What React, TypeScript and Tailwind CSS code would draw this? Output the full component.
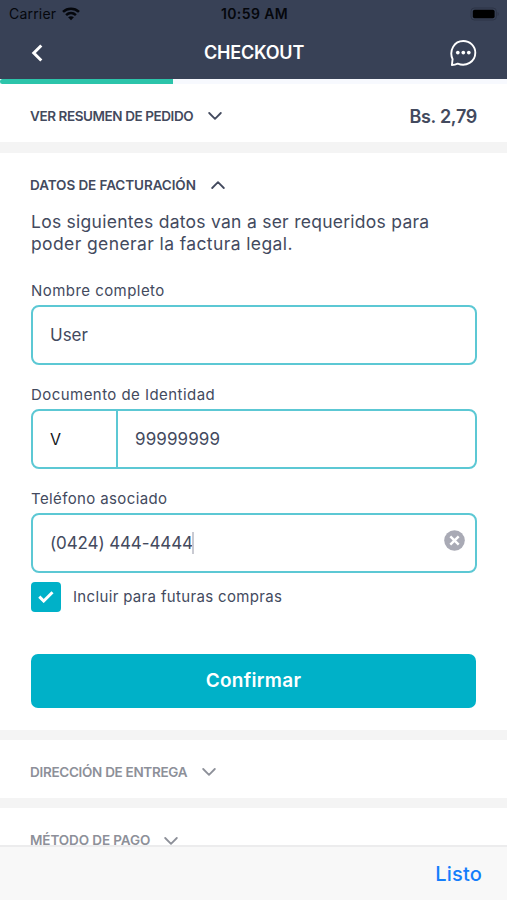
import { useState } from 'react';

const Wifi = () => (
  <svg width="18" height="14" viewBox="0 0 18 14" fill="none" stroke="#05070c" strokeWidth="2.6">
    <path d="M1 4.9C5.6 .7 12.4 .7 17 4.9" />
    <path d="M4.1 8.1C7 5.5 11 5.5 13.9 8.1" />
    <path d="M9 13.3L6.1 10.3C7.8 8.9 10.2 8.9 11.9 10.3Z" fill="#05070c" stroke="none" />
  </svg>
);

const Battery = () => (
  <svg width="30" height="14" viewBox="0 0 30 14">
    <rect x="1" y="1" width="25.4" height="12" rx="3.4" fill="none" stroke="#2d3446" strokeWidth="1" />
    <rect x="2.8" y="2.8" width="21.8" height="8.4" rx="1.8" fill="#000" />
    <path d="M27.6 5v4c1.5-.7 1.5-3.3 0-4z" fill="#2d3446" />
  </svg>
);

const ChatBubble = () => (
  <svg width="28" height="28" viewBox="0 0 28 28" fill="none" stroke="#fff" strokeWidth="1.9" strokeLinejoin="round">
    <path d="M2.9 26L3.6 20.2C-.2 11.6 5.2 2 14.3 2C21 2 26.3 7.2 26.3 13.8C26.3 22.8 17 28.2 8.7 24.6Q6 25.9 2.9 26Z" />
    <g fill="#fff" stroke="none">
      <circle cx="8.8" cy="13.6" r="1.85" />
      <circle cx="14.3" cy="13.6" r="1.85" />
      <circle cx="19.8" cy="13.6" r="1.85" />
    </g>
  </svg>
);

const Chevron = ({ up = false }: { up?: boolean }) => (
  <svg width="14" height="8" viewBox="0 0 14 8" fill="none" stroke="currentColor" strokeWidth="1.8" strokeLinecap="round" strokeLinejoin="round">
    <path d={up ? 'M1.2 7L7 1.2L12.8 7' : 'M1.2 1L7 6.8L12.8 1'} />
  </svg>
);

const Divider = ({ className = 'h-[10px]' }: { className?: string }) => (
  <div className={`shrink-0 bg-[#f4f4f4] ${className}`} />
);

const App = () => {
  const [name, setName] = useState('User');
  const [documentId, setDocumentId] = useState('99999999');
  const [phone, setPhone] = useState('(0424) 444-4444');
  const [save, setSave] = useState(true);

  return (
    <div className="flex h-[900px] w-[507px] flex-col overflow-hidden bg-white font-['Inter',sans-serif] text-[#434a5e]">
      {/* Header */}
      <header className="h-[79px] shrink-0 bg-[#384156]">
        <div className="grid h-[27px] grid-cols-3 items-center pl-[9px] pr-[7px] text-[#05070c]">
          <div className="flex items-center gap-[6px]">
            <span className="text-[14px] tracking-[0.2px]">Carrier</span>
            <Wifi />
          </div>
          <span className="text-center text-[14px] font-semibold tracking-[0.4px]">10:59 AM</span>
          <div className="flex justify-end"><Battery /></div>
        </div>
        <div className="flex h-[51px] items-center justify-between pl-[31px] pr-[30px] text-white">
          <button className="w-7" aria-label="Volver">
            <svg width="12" height="18" viewBox="0 0 12 18" fill="none" stroke="#fff" strokeWidth="3">
              <path d="M10.3 1.5L2.8 9L10.3 16.5" />
            </svg>
          </button>
          <h1 className="text-[18px] font-semibold tracking-[-0.2px]">CHECKOUT</h1>
          <button aria-label="Ayuda"><ChatBubble /></button>
        </div>
      </header>

      {/* Progress */}
      <div className="h-[5px] shrink-0 bg-[#f7f9fe]">
        <div className="h-full w-[173px] rounded-l-full bg-[#2cc4aa]" />
      </div>

      <main className="flex min-h-0 flex-1 flex-col overflow-hidden">
        <section className="flex h-[58px] shrink-0 items-center justify-between px-[30px] pt-[6px]">
          <button className="flex items-center gap-[15px]">
            <span className="text-[13.5px] font-semibold tracking-[-0.42px]">VER RESUMEN DE PEDIDO</span>
            <Chevron />
          </button>
          <span className="text-[18px] font-semibold tracking-[-0.3px]">Bs. 2,79</span>
        </section>
        <Divider className="h-[11px]" />

        <section className="flex h-[577px] shrink-0 flex-col pl-[31px] pr-[30px] pt-[22px]">
          <button className="-ml-px flex h-5 items-center gap-[15px]">
            <span className="text-[13.5px] font-semibold tracking-[-0.08px]">DATOS DE FACTURACIÓN</span>
            <Chevron up />
          </button>
          <p className="mt-[16px] whitespace-nowrap text-[17.5px] leading-[22px] tracking-[0.26px]">
            Los siguientes datos van a ser requeridos para<br />
            <span className="tracking-[0.39px]">poder generar la factura legal.</span>
          </p>

          <label className="mt-[26px] text-[15px] leading-[20px] tracking-[0.45px]">Nombre completo</label>
          <div className="mt-[4px] flex h-[60px] shrink-0 rounded-[8px] border-2 border-[#5cc8d4]">
            <input className="w-full bg-transparent px-[17px] pt-[2px] text-[17px] outline-none" value={name} onChange={(e) => setName(e.target.value)} />
          </div>

          <label className="mt-[20px] text-[15px] leading-[20px] tracking-[0.45px]">Documento de Identidad</label>
          <div className="mt-[4px] flex h-[60px] shrink-0 rounded-[8px] border-2 border-[#5cc8d4]">
            <button className="w-[85px] shrink-0 border-r-2 border-[#5cc8d4] px-[17px] text-left text-[16px] text-[#15171c]">V</button>
            <input className="w-full bg-transparent px-[17px] pt-[2px] text-[17px] tracking-[0.1px] outline-none" value={documentId} onChange={(e) => setDocumentId(e.target.value)} />
          </div>

          <label className="mt-[20px] text-[15px] leading-[20px] tracking-[0.38px]">Teléfono asociado</label>
          <div className="mt-[4px] flex h-[60px] shrink-0 items-center rounded-[8px] border-2 border-[#5cc8d4] pl-[17px] pr-[10px]">
            <input className="w-[142px] bg-transparent pt-[2px] text-[17px] tracking-[-0.12px] outline-none" value={phone} onChange={(e) => setPhone(e.target.value)} />
            <span className="h-[22px] w-[2px] bg-[#c9cad2]" />
            <button className="mb-[6px] ml-auto" aria-label="Borrar" onClick={() => setPhone('')}>
              <svg width="21" height="21" viewBox="0 0 21 21">
                <circle cx="10.5" cy="10.5" r="10.3" fill="#a9aab5" />
                <path d="M6.3 6.3L14.7 14.7M14.7 6.3L6.3 14.7" stroke="#fff" strokeWidth="2.4" />
              </svg>
            </button>
          </div>

          <div className="mt-[9px] flex items-center gap-[12px]">
            <button
              className="flex size-[30px] items-center justify-center rounded-[4px] bg-[#00b1c8]"
              role="checkbox"
              aria-checked={save}
              aria-label="Incluir para futuras compras"
              onClick={() => setSave(!save)}
            >
              {save && (
                <svg width="16" height="12" viewBox="0 0 16 12" fill="none" stroke="#fff" strokeWidth="3">
                  <path d="M1.3 5.6L5.7 10L14.5 1.3" />
                </svg>
              )}
            </button>
            <span className="text-[15px] tracking-[0.34px]">Incluir para futuras compras</span>
          </div>

          <button className="mt-[42px] h-[54px] w-[445px] shrink-0 rounded-[7px] bg-[#00b1c8] text-[19px] font-semibold tracking-[0.3px] text-white">
            Confirmar
          </button>
        </section>
        <Divider />

        <section className="flex h-[58px] shrink-0 items-center px-[30px] pt-[6px] text-[#8d9099]">
          <button className="flex items-center gap-[15px]">
            <span className="text-[13.5px] font-semibold tracking-[-0.3px]">DIRECCIÓN DE ENTREGA</span>
            <Chevron />
          </button>
        </section>
        <Divider />

        <section className="flex shrink-0 px-[30px] pt-[27px] text-[#8d9099]">
          <button className="flex items-center gap-[14px]">
            <span className="text-[13.5px] font-semibold leading-[11px] tracking-[-0.1px]">MÉTODO DE PAGO</span>
            <Chevron />
          </button>
        </section>
      </main>

      {/* Keyboard toolbar */}
      <footer className="flex h-[55px] shrink-0 items-center justify-end border-t-2 border-[#ececed] bg-[#f8f8f8] pr-[25px]">
        <button className="text-[20px] font-medium tracking-[0.2px] text-[#147efb]">Listo</button>
      </footer>
    </div>
  );
};

export default App;
